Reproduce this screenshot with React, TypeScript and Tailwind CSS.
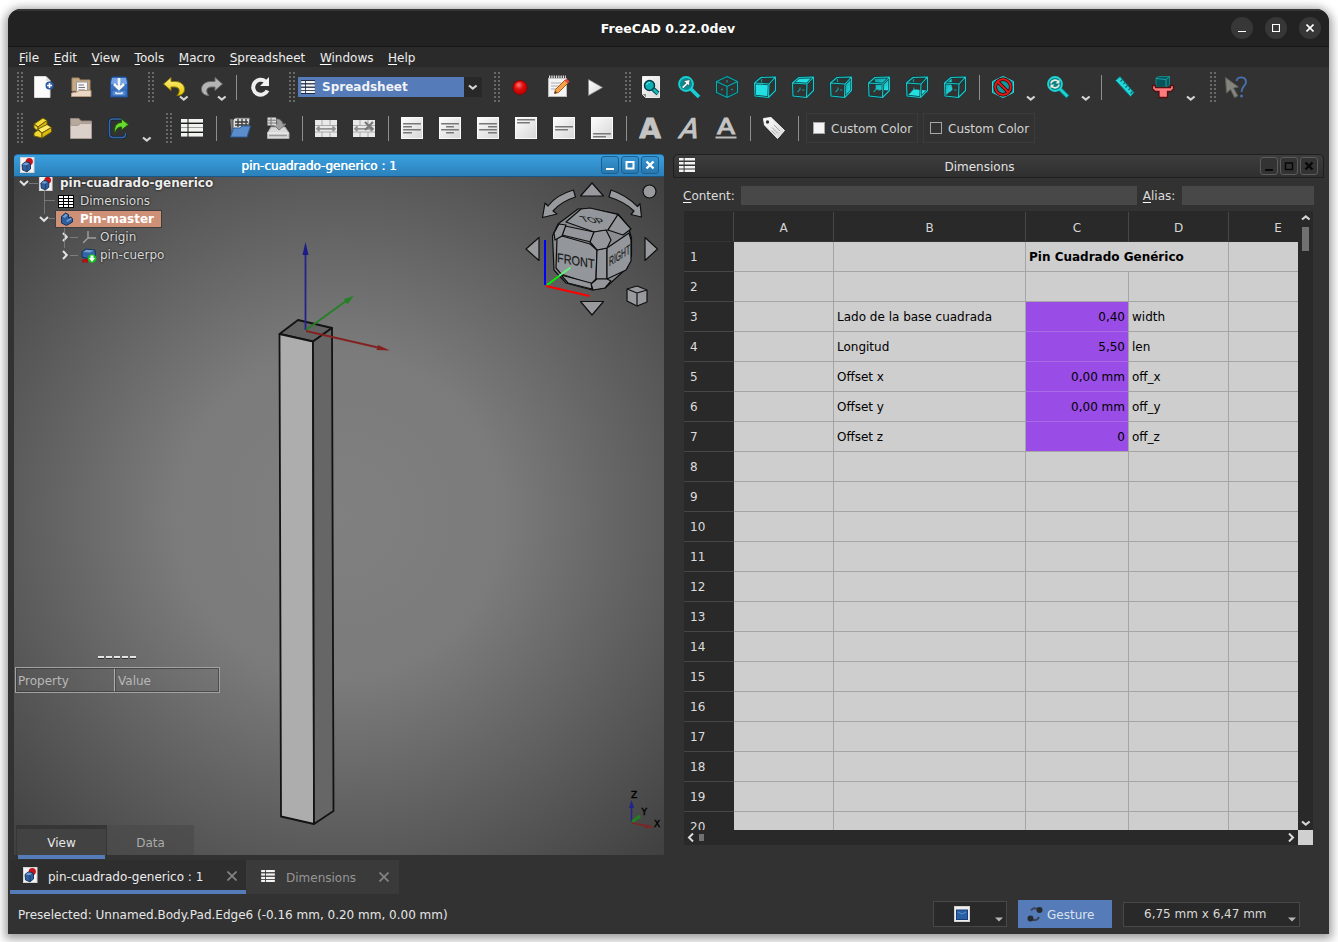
import React from "react";

type Kids = { children?: React.ReactNode };

/* ---------- toolbar building blocks ---------- */

function Icon({ children, label }: Kids & { label?: string }) {
  return (
    <div className="flex h-10 w-[38px] shrink-0 items-center justify-center">
      <svg width="24" height="24" viewBox="0 0 24 24" fill="none" aria-label={label} className="overflow-visible">
        {children}
      </svg>
    </div>
  );
}

function Grip({ className = "w-[17px]" }: { className?: string }) {
  return (
    <div className={`flex shrink-0 justify-end pr-px ${className}`}>
      <svg width="6" height="30" viewBox="0 0 6 30" fill="#686868">
        {[0, 4, 8, 12, 16, 20, 24, 28].map((y) => (
          <g key={y}>
            <rect x="0" y={y} width="2" height="2" />
            <rect x="4" y={y} width="2" height="2" />
          </g>
        ))}
      </svg>
    </div>
  );
}

function Sep({ className = "w-[10px] justify-center" }: { className?: string }) {
  return (
    <div className={`flex shrink-0 ${className}`}>
      <div className="h-[25px] w-px bg-[#8f8f8f]" />
    </div>
  );
}

function Chevron({ d = "M1 1.5L4.8 4.6L8.6 1.5" }: { d?: string }) {
  return (
    <svg width="10" height="7" viewBox="0 0 10 7" fill="none">
      <path d={d} stroke="#d4d4d4" strokeWidth="2.2" />
    </svg>
  );
}

function DropArrow() {
  return (
    <div className="flex h-10 w-[17px] shrink-0 items-end justify-center pb-[5px]">
      <Chevron />
    </div>
  );
}

function IconWithArrow({ children }: Kids) {
  return (
    <div className="relative">
      <Icon>{children}</Icon>
      <div className="absolute right-1 bottom-[5px]">
        <Chevron />
      </div>
    </div>
  );
}

/* ---------- icons ---------- */

function TableRows() {
  return (
    <>
      <rect x="1" y="3" width="22" height="18" fill="#1c1c1c" />
      {[3, 8, 12, 17].map((y) => (
        <g key={y} fill="#f1f3ef">
          <rect x="1" y={y} width="6.5" height="3.6" />
          <rect x="8.5" y={y} width="14.5" height="3.6" />
        </g>
      ))}
    </>
  );
}

function TableGlyph({ w = 16, h = 14 }: { w?: number; h?: number }) {
  return (
    <svg width={w} height={h} viewBox="0 0 16 14" fill="#f3f3f3">
      {[0, 4, 8, 11.5].map((y) => (
        <g key={y}>
          <rect x="0" y={y} width="4.6" height="2.5" />
          <rect x="5.6" y={y} width="10.4" height="2.5" />
        </g>
      ))}
    </svg>
  );
}

function AlignIcon({ lines }: { lines: number[][] }) {
  return (
    <Icon>
      <rect x="1.5" y="1.5" width="21" height="21" fill="url(#paper)" stroke="#fafafa" />
      {lines.map(([x, y, w]) => (
        <rect key={y} x={x} y={y} width={w} height="1.5" rx=".5" fill="#777" />
      ))}
    </Icon>
  );
}

const faces: Record<string, string> = {
  front: "M1.5 8L16 9L15.5 22.5L2 21Z",
  top: "M1.5 8L8 2.5L22.5 2L16 9Z",
  right: "M16 9L22.5 2V15.5L15.5 22.5Z",
  rear: "M8 2.5L22.5 2V15.5L9 14.5Z",
  bottom: "M2 21L9 14.5L22.5 15.5L15.5 22.5Z",
  left: "M1.5 8L8 2.5L9 14.5L2 21Z",
};

function CubeIcon({ face }: { face: string }) {
  const gradient = face === "left" || face === "right" || face === "rear";
  return (
    <Icon>
      <path d="M8.5 3.5V7.5M9 12.5v2.500M9 14.5L6.500 17M11 15H13.500" stroke="#15959a" strokeWidth="1.2" />
      <path d={faces[face]} fill={gradient ? "url(#teal)" : "#24dfe2"} />
      <path d="M1.5 8L16 9L15.5 22.5L2 21ZM1.5 8L8 2.5L22.5 2L16 9M22.5 2V15.5L15.5 22.5" stroke="#073e40" strokeWidth="2.3" strokeLinejoin="round" />
      <path d="M1.5 8L16 9L15.5 22.5L2 21ZM1.5 8L8 2.5L22.5 2L16 9M22.5 2V15.5L15.5 22.5" stroke="#20c2c5" strokeWidth="1.1" strokeLinejoin="round" />
    </Icon>
  );
}

function MergeBase() {
  return (
    <>
      <rect x="1" y="4" width="22" height="17" fill="#e9e9e9" />
      <path d="M1 9.5H23M1 16H23M8 4V9.5M16 4V9.5M8 16V21M16 16V21" stroke="#aaa" />
      <path d="M3 12.8H21M5.5 10.5L3 12.8L5.5 15M18.5 10.5L21 12.8L18.5 15" stroke="#929292" strokeWidth="1.8" />
    </>
  );
}

function LetterIcon({
  className,
  transform,
  weight,
  underline,
  children,
}: Kids & { className: string; transform: string; weight: string; underline?: boolean }) {
  return (
    <Icon>
      <text transform={transform} textAnchor="middle" className={className} fill="#c4c4c4" stroke="#c4c4c4" strokeWidth={weight}>
        {children}
      </text>
      {underline && <rect x="1.5" y="20.500" width="21" height="2" fill="#bdbdbd" />}
    </Icon>
  );
}

function DocIcon({ className = "h-4 w-4" }: { className?: string }) {
  return (
    <svg viewBox="0 0 16 16" className={`shrink-0 ${className}`}>
      <rect x="1.5" y=".5" width="13.5" height="15" fill="#f4f4f4" stroke="#d4d4d4" />
      <circle cx="10.3" cy="4.6" r="3.6" fill="#c4141b" />
      <path d="M3 7.5L6 5L10.5 5.5L11.5 8V12L8 14.8L3.5 13Z" fill="#2f5f9f" stroke="#122c50" strokeWidth=".9" />
      <path d="M3.5 7.5L6.2 5.6L10 6L8 8.2Z" fill="#729fcf" />
      <path d="M8 8.2V14.2" stroke="#183860" strokeWidth=".8" />
    </svg>
  );
}

function Defs() {
  return (
    <svg width="0" height="0" className="absolute">
      <defs>
        <linearGradient id="paper" x1="0" y1="0" x2="1" y2="1">
          <stop offset="0" stopColor="#fdfdfd" />
          <stop offset="1" stopColor="#d6d6d6" />
        </linearGradient>
        <linearGradient id="teal" x1="0" y1="0" x2="1" y2="1">
          <stop offset="0" stopColor="#079aa0" />
          <stop offset="1" stopColor="#2ce6e8" />
        </linearGradient>
        <linearGradient id="yellow" x1="0" y1="0" x2="0" y2="1">
          <stop offset="0" stopColor="#fff08a" />
          <stop offset="1" stopColor="#e5c800" />
        </linearGradient>
        <radialGradient id="redball" cx=".4" cy=".3" r=".7">
          <stop offset="0" stopColor="#ff7777" />
          <stop offset=".5" stopColor="#e01111" />
          <stop offset="1" stopColor="#c00000" />
        </radialGradient>
      </defs>
    </svg>
  );
}

/* ---------- window chrome ---------- */

function TitleBar() {
  const btn = "flex size-[22px] items-center justify-center rounded-full bg-[#373737]";
  return (
    <div className="flex h-[38px] shrink-0 items-center border-t-2 border-b border-t-[#363636] border-b-[#161616] bg-[#222] pr-2">
      <div className="w-[97px]" />
      <div className="flex-1 text-center text-[12.5px] font-bold text-white">FreeCAD 0.22.0dev</div>
      <div className="flex w-[90px] gap-3 pb-px">
        <div className={btn}>
          <svg width="8" height="10" className="mt-1">
            <path d="M0 6.5H8" stroke="#fff" />
          </svg>
        </div>
        <div className={btn}>
          <svg width="8" height="8">
            <path d="M.5.5H7.5V7.5H.5Z" stroke="#fff" fill="none" strokeWidth="1.2" />
          </svg>
        </div>
        <div className={btn}>
          <svg width="8" height="8">
            <path d="M.5.5L7.5 7.5M7.5.5L.5 7.5" stroke="#fff" strokeWidth="1.6" />
          </svg>
        </div>
      </div>
    </div>
  );
}

function Mnemonic({ text }: { text: string }) {
  return (
    <span className="whitespace-nowrap">
      <span className="underline decoration-white decoration-1 underline-offset-2">{text[0]}</span>
      {text.slice(1)}
    </span>
  );
}

function MenuBar() {
  return (
    <div className="flex h-5 shrink-0 items-center gap-[14.6px] bg-[#2a2a2a] pt-0.5 pl-[11px] text-[#eee]">
      {["File", "Edit", "View", "Tools", "Macro", "Spreadsheet", "Windows", "Help"].map((m) => (
        <Mnemonic key={m} text={m} />
      ))}
    </div>
  );
}

function ToolbarTop() {
  return (
    <div className="flex h-10 items-center">
      <Grip className="w-4" />
      <Icon>
        <path d="M3.5 1.5H15L19 5.5V22.5H3.5Z" fill="#fbfbfb" stroke="#d8d8d8" />
        <path d="M15 1.5V6H19" fill="#ddd" />
        <circle cx="18.5" cy="10.5" r="4" fill="#2b5aa5" />
        <path d="M18.5 8V13M16 10.5H21" stroke="#fff" strokeWidth="1.6" />
      </Icon>
      <Icon>
        <path d="M3 3H10L11 5H21V16H3Z" fill="#c7a985" stroke="#a58a68" />
        <rect x="7.5" y="7" width="11" height="11" fill="#f6f6f6" stroke="#999" />
        <path d="M9.5 10H15M9.5 12.5H16M9.5 15H16" stroke="#777" />
        <path d="M2.5 18L8 17L10 15.5H22V21.5H2.5Z" fill="#ead8c4" stroke="#b39a80" />
      </Icon>
      <Icon>
        <path d="M5 2H19L20.500 7V22H3.500V7Z" fill="#3c74c4" stroke="#1d4f99" />
        <path d="M5 3H19L20 9H4Z" fill="#75a5e5" />
        <rect x="5" y="15" width="14" height="6" fill="#5288d4" stroke="#2c5ea8" />
        <path d="M12 3V12M7 9L12 14L17 9" stroke="#f5f5f5" strokeWidth="2.6" />
        <path d="M9 17V18.500H15V17" stroke="#eee" strokeWidth="1.4" />
      </Icon>
      <Grip />
      <IconWithArrow>
        <path d="M1.500 9L9 2.500V6.500H13C19 6.500 22.500 10 22.500 14C22.500 18 20 20.500 15 20.500C18 17.500 18.500 12.500 13 12H9V15.500Z" fill="url(#yellow)" stroke="#8c7600" />
      </IconWithArrow>
      <IconWithArrow>
        <path d="M22.500 9L15 2.500V6.500H11C5 6.500 1.500 10 1.500 14C1.500 18 4 20.500 9 20.500C6 17.500 5.500 12.500 11 12H15V15.500Z" fill="#b4b4b4" stroke="#696969" />
      </IconWithArrow>
      <Sep />
      <Icon>
        <path d="M17.500 6.500A7.500 7.500 0 1 0 19.500 15.500" stroke="#eee" strokeWidth="4" />
        <path d="M21 2V11H12Z" fill="#f4f4f4" />
      </Icon>
      <Grip />
      <div className="mr-0.5 ml-0.5 flex h-5 w-[184px] shrink-0">
        <div className="flex w-[166px] items-center bg-[#557bb8] pl-[3px] font-bold text-[#f1f3f7]">
          <div className="bg-[#1f2e45] py-px">
            <TableGlyph w={14} h={12} />
          </div>
          <span className="ml-[7px]">Spreadsheet</span>
        </div>
        <div className="flex flex-1 items-center justify-center bg-[#282828]">
          <Chevron />
        </div>
      </div>
      <Grip />
      <Icon>
        <circle cx="12" cy="12.500" r="7" fill="#d00" stroke="#7f0808" />
        <circle cx="12" cy="12.500" r="6" fill="url(#redball)" />
      </Icon>
      <Icon>
        <rect x="2.500" y="3.500" width="18" height="18" fill="#f4f4f4" stroke="#bbb" />
        <path d="M3 2H20" stroke="#ddd" strokeWidth="3" strokeDasharray="1.300 1" />
        <path d="M5 8H15M5 11H14M5 14H11" stroke="#aaa" />
        <path d="M8.500 18.500L9.500 14.500L19 5L22 8L12.500 17.500Z" fill="#f5a14a" stroke="#a8601b" />
        <path d="M18.500 5.500L20.500 3.500L23.500 6.500L21.500 8.500Z" fill="#e34a4a" />
        <path d="M8.500 18.500L9.200 16L10.900 17.700Z" fill="#333" />
      </Icon>
      <Icon>
        <path d="M4.500 4.500L18.500 12.500L4.500 20.500Z" fill="url(#paper)" stroke="#888" strokeWidth=".7" />
      </Icon>
      <Grip />
      <Icon>
        <path d="M3.500 1.500H20.500V22.500H6.500L3.500 19.500Z" fill="url(#paper)" stroke="#eee" />
        <path d="M3.500 19L7 22.500V19Z" fill="#888" />
        <path d="M14 14L19 18.500" stroke="#044a50" strokeWidth="4.500" />
        <path d="M14 14L19 18.500" stroke="#16b6bc" strokeWidth="2.600" />
        <circle cx="10.500" cy="10.500" r="5" fill="#0faeb4" stroke="#033f45" strokeWidth="1.500" />
        <path d="M7.500 10A3 3 0 0 1 11 7.500" stroke="#62eef0" />
      </Icon>
      <Icon>
        <path d="M14 14L22 22" stroke="#18cfd2" strokeWidth="3.800" />
        <circle cx="9" cy="9" r="7" fill="#078d94" stroke="#18cfd2" strokeWidth="1.800" />
        <path d="M4.500 12L9 8L6.500 6L13 4.500L12 11L10.500 9.500L6.500 13.500Z" fill="#f5f5f5" stroke="#224a4a" strokeWidth=".6" />
      </Icon>
      <Icon>
        <path d="M12 1.500L22.500 6.500V17.500L12 22.500L1.500 17.500V6.500ZM1.500 6.500L12 11.500L22.500 6.500M12 11.500V22.500" stroke="#064144" strokeWidth="2.300" />
        <path d="M12 1.500L22.500 6.500V17.500L12 22.500L1.500 17.500V6.500ZM1.500 6.500L12 11.500L22.500 6.500M12 11.500V22.500" stroke="#19a5a8" strokeWidth="1.100" />
        <path d="M12 5V7.500M6 15L8 14M18 15L16 14" stroke="#19a5a8" />
      </Icon>
      {["front", "top", "right", "rear", "bottom", "left"].map((f) => (
        <CubeIcon key={f} face={f} />
      ))}
      <Sep />
      <Icon>
        <path d="M12 1.500L22.500 6.500V17.500L12 22.500L1.500 17.500V6.500Z" fill="#0c999d" stroke="#25dde0" />
        <circle cx="12" cy="12" r="7.800" stroke="#350202" strokeWidth="3.600" />
        <path d="M6.500 6.500L17.500 17.500" stroke="#350202" strokeWidth="3.600" />
        <circle cx="12" cy="12" r="7.800" stroke="#e01b1b" strokeWidth="2" />
        <path d="M6.500 6.500L17.500 17.500" stroke="#e01b1b" strokeWidth="2" />
      </Icon>
      <DropArrow />
      <Icon>
        <path d="M14 14L22 22" stroke="#0a6064" strokeWidth="5" />
        <path d="M14 14L21.500 21.500" stroke="#1ed3d6" strokeWidth="3" />
        <circle cx="9" cy="9" r="7" fill="#078085" stroke="#1ed3d6" strokeWidth="1.800" />
        <path d="M5 8.500C5.500 5 10 4 12.500 7M13 9.500C12.500 13 8 14 5.500 11" stroke="#ececdc" strokeWidth="1.700" />
        <path d="M13.500 4.500V8.500H9.500ZM4.500 13.500V9.500H8.500Z" fill="#ececdc" />
      </Icon>
      <DropArrow />
      <Sep className="w-3 justify-end pr-1" />
      <Icon>
        <path d="M2.500 5.500L7 1.500L21 17.500L17.500 21.500Z" fill="#23d6da" stroke="#076d70" />
        <path d="M9.500 4.500L7.500 6.500M12 7.500L10.500 9M14.500 10.500L12.500 12.500M17 13.500L15.500 15M19.500 16.500L17.500 18.500" stroke="#08666a" strokeWidth="1.200" />
      </Icon>
      <Icon>
        <path d="M5 3L8 1.500H18.500V10L15 12H5Z" fill="#075357" stroke="#168388" />
        <path d="M5 3.500L15 4.500L18.500 1.500M15 4.500V12" stroke="#1aa1a5" />
        <path d="M1.500 10.500H4.500V12.500H19.500V10.500H22.500V14L20 16.500H16.500V22.500H8V16.500H4.500L1.500 14Z" fill="#ff7a7d" stroke="#521010" strokeWidth="1.300" />
      </Icon>
      <DropArrow />
      <Grip className="w-[18px]" />
      <Icon>
        <path d="M1.500 2.500L14.500 12L9.500 13L14 21L10.500 22.500L6.500 14.500L2.500 18Z" fill="#85857f" stroke="#5e5e5a" />
        <path d="M12.500 6C13 1 22 1 22 7C22 11 17.500 11 17.500 17" stroke="#4672b0" strokeWidth="1.900" />
        <circle cx="17.500" cy="21" r="1.500" fill="#4672b0" />
      </Icon>
    </div>
  );
}

function ColorButton({ fill }: { fill: string }) {
  return (
    <div className="flex h-[30px] w-[112px] shrink-0 items-center gap-[6px] border border-[#3b3b3b] pl-[6px] whitespace-nowrap text-[#d2d2d2]">
      <span className={`size-3 border border-[#a6a6a6] ${fill}`} />
      <span className="pt-px">Custom Color</span>
    </div>
  );
}

function ToolbarBottom() {
  return (
    <div className="flex h-[42px] items-center">
      <Grip className="w-4" />
      <Icon>
        <path d="M3 8L12 2L16 4.500L7 11ZM3 8L7 11V15L3 12Z" fill="#f5dc3b" stroke="#695b05" />
        <path d="M7 11L16 4.500V9L7 15Z" fill="#dcb911" stroke="#695b05" />
        <path d="M3 17L7 14L11 17V22L3 20Z" fill="#f3d733" stroke="#695b05" />
        <path d="M7 13L16 8.500L20.500 11.500L11 17Z" fill="#ffeb66" stroke="#695b05" />
        <path d="M11 17L20.500 11.500V16L11 22Z" fill="#dcb911" stroke="#695b05" />
      </Icon>
      <Icon>
        <path d="M1.500 2.500H10L12 5H22.500V11H1.500Z" fill="#b7a89e" stroke="#94857c" />
        <path d="M1.500 9.500H9L11.500 7.500H22.500V22.500H1.500Z" fill="#dbd1ca" stroke="#a89b92" />
      </Icon>
      <Icon>
        <path d="M14 3H6C3.500 3 2.500 4 2.500 6V18C2.500 20.500 3.500 21.500 6 21.500H15C17.500 21.500 18.500 20.500 18.500 18V17" stroke="#11243c" strokeWidth="3" />
        <path d="M14 3H6C3.500 3 2.500 4 2.500 6V18C2.500 20.500 3.500 21.500 6 21.500H15C17.500 21.500 18.500 20.500 18.500 18V17" stroke="#3867a2" strokeWidth="1.500" />
        <path d="M8 17C6.500 10 10 6.500 14.500 6.500V3L21.500 8.500L14.500 14V11C10.500 11 9.500 13 8 17Z" fill="#68da2d" stroke="#1c5c08" />
      </Icon>
      <DropArrow />
      <Grip className="w-[18px]" />
      <Icon>
        <TableRows />
      </Icon>
      <Sep />
      <Icon>
        <path d="M2 3L4 20L7 19V4Z" fill="#7b7b7b" />
        <path d="M5 4L7 2H22L20 13H5Z" fill="#e0e0e0" stroke="#555" />
        <path d="M7 6H20M7 9H20M10 3V11M14 3V11M18 3V11" stroke="#383838" strokeWidth="1.300" />
        <path d="M5.500 12H12L14 10H22.500L19 21H2.500Z" fill="#5b8dcc" stroke="#2d5c99" />
      </Icon>
      <Icon>
        <path d="M5 11H19L23 17V22.500H1.500V17Z" fill="#d8d8d8" stroke="#ababab" />
        <path d="M1.500 17H23" stroke="#f0f0f0" />
        <path d="M10 3C14 3 16.500 5 16.500 8H20L13 14L7 8H11C11 6 10.500 5 10 3Z" fill="#a0a0a0" stroke="#777" />
        <path d="M1.500 1.500H10V9.500H1.500Z" fill="#dcdcdc" />
        <path d="M1.500 4.200H10M1.500 7H10M5 1.500V9.500" stroke="#777" />
        <path d="M3 19.500H21" stroke="#999" strokeWidth="1.500" />
      </Icon>
      <Sep />
      <Icon>
        <MergeBase />
      </Icon>
      <Icon>
        <MergeBase />
        <path d="M13 6L21 14M21 6L13 14" stroke="#777" strokeWidth="2.200" />
      </Icon>
      <Sep />
      <AlignIcon lines={[[3, 7, 18], [3, 10, 9], [3, 13, 18], [3, 16, 9]]} />
      <AlignIcon lines={[[3, 7, 18], [8, 10, 8], [3, 13, 18], [8, 16, 8]]} />
      <AlignIcon lines={[[3, 7, 18], [12, 10, 9], [3, 13, 18], [12, 16, 9]]} />
      <AlignIcon lines={[[3, 3, 18], [3, 6, 13]]} />
      <AlignIcon lines={[[3, 10, 18], [3, 13, 13]]} />
      <AlignIcon lines={[[3, 17, 18], [3, 20, 13]]} />
      <Sep />
      <LetterIcon className="text-[27px] font-bold" transform="translate(12 21.5) scale(1.04 1)" weight=".8">
        A
      </LetterIcon>
      <LetterIcon className="text-[27px]" transform="matrix(1 0 -.32 1 11 21.5)" weight="1">
        A
      </LetterIcon>
      <LetterIcon underline className="text-[22px]" transform="translate(12 18) scale(1.2 1)" weight="1">
        A
      </LetterIcon>
      <Sep />
      <Icon>
        <path d="M1.500 2.500L9 1.500L22.500 14.500L15.500 22.500L2.500 9Z" fill="url(#paper)" stroke="#f5f5f5" />
        <circle cx="5.500" cy="6" r="1.700" fill="#333" />
        <path d="M12 9L18 15M10 11.500L16 17.500M9.500 14.500L13.500 18.500" stroke="#aaa" />
      </Icon>
      <Sep />
      <div className="ml-[3px] flex gap-[5px]">
        <ColorButton fill="bg-[#f4f4f4]" />
        <ColorButton fill="bg-transparent" />
      </div>
    </div>
  );
}

function FrameButtons({ active }: { active: boolean }) {
  const c = active ? "#ffffff" : "#080808";
  const box = active
    ? "border-[#1c5f90] bg-gradient-to-b from-[#3795d3] to-[#2878ad]"
    : "border-[#5c5c5c] bg-[#333]";
  const glyphs = [
    <path key="a" d="M2 10H10" stroke={c} strokeWidth="2" />,
    <path key="b" d="M2.500 3V9.500H9.500V3Z" stroke={c} strokeWidth={active ? "2" : "1.500"} />,
    <path key="c" d="M2.500 2.500L9.500 9.500M9.500 2.500L2.500 9.500" stroke={c} strokeWidth="2.400" />,
  ];
  return (
    <div className="flex gap-[2px] pb-px">
      {glyphs.map((g, i) => (
        <div key={i} className={`flex size-[18px] items-center justify-center rounded-[3px] border ${box}`}>
          <svg width="12" height="12" viewBox="0 0 12 12" fill="none">
            {g}
          </svg>
        </div>
      ))}
    </div>
  );
}

/* ---------- 3D view ---------- */

function Scene() {
  return (
    <svg width="650" height="678" viewBox="14 177 650 678" fill="none" className="block">
      <defs>
        <radialGradient id="view" gradientUnits="userSpaceOnUse" cx="339" cy="516" r="470">
          <stop offset="0" stopColor="#808080" />
          <stop offset=".35" stopColor="#7b7b7b" />
          <stop offset="1" stopColor="#404040" />
        </radialGradient>
      </defs>
      <rect x="14" y="177" width="650" height="678" fill="url(#view)" />

      <g stroke="#131313" strokeWidth="1.800" strokeLinejoin="round">
        <path d="M279.500 334L298 320L332 328L313 341.500Z" fill="#636363" />
        <path d="M279.500 334L313 341.500L314 824L281 816.500Z" fill="#adadad" />
        <path d="M313 341.500L332 328L333.500 811L314 824Z" fill="#666" />
      </g>
      <path d="M305.500 330V253" stroke="#23238c" strokeWidth="1.800" />
      <path d="M305.500 242L302.500 255H308.500Z" fill="#1c1c8a" />
      <path d="M306 330L346 301" stroke="#238023" strokeWidth="1.800" />
      <path d="M353.500 296L344 299L347.500 304.500Z" fill="#238023" />
      <path d="M306 331L378 347.500" stroke="#842222" strokeWidth="1.800" />
      <path d="M390 350.500L378 345L376.500 350Z" fill="#842222" />

      <g stroke="#101010" strokeWidth="1.200" strokeLinejoin="round" fill="#989a9e">
        <path d="M592 183L603.500 196H580.500Z" />
        <path d="M592 315L603.500 301.500H580.500Z" />
        <path d="M526 249L539 237.500V260.500Z" />
        <path d="M657.500 249L645 237.500V260.500Z" />
        <circle cx="649.500" cy="191.500" r="6.500" />
        <path d="M573.500 190L575.500 197C566 200 558 205 553 211L557 214L542.500 217.500L545 203L548 206C554 198 563 193 573.500 190Z" />
        <path d="M611 190L609 197C619 200 628 205 634 211L631 214.500L641.500 217L640 203.500L637.500 206.500C630 199 620 193 611 190Z" />
        <path d="M627 289L637 286L647 290V302L637 306L627 301Z" />
        <path d="M627 289L637 293L647 290M637 293V306" />
      </g>

      <g stroke="#0d0d0d" strokeWidth="1.200" strokeLinejoin="round" fill="#93969a">
        <path d="M578 209L590 208.500L618 214L628 226L631.500 238V255L627 268L605 288L592 290L566 283L554 270L552.500 236L558 224Z" fill="#898c90" />
        <path d="M566 222L581 209L590 208L618 214.500L608 230L594 232Z" />
        <path d="M618 214.500L631 229L623 235L608 230Z" />
        <path d="M557 238L562 236L590 244L597 250L596 279L591 284L561 274L556 268Z" />
        <path d="M565 226L594 232L591 242L562 235Z" />
        <path d="M597 250L607 248V279L596 279Z" />
        <path d="M607 248L629 233L631 240V261L626 270L607 279Z" />
        <path d="M594 232L606 230L611 240L607 248L597 250L590 242Z" />
        <path d="M554 233L559 224L566 225L562 236L555 240Z" />
        <path d="M591 284L597 279L607 279L611 281L605 288L593 290Z" />
        <path d="M561 275L591 283L592 289L568 283Z" />
      </g>
      <g fill="#191919" stroke="#191919" strokeWidth=".2" className="font-[Liberation_Sans]">
        <text transform="matrix(.85 .1 .45 .62 583 221.500)" fontSize="13">
          TOP
        </text>
        <text transform="matrix(.84 .15 0 1 557 262)" fontSize="13">
          FRONT
        </text>
        <text transform="matrix(.52 -.33 0 1 609 266.500)" fontSize="13">
          RIGHT
        </text>
      </g>
      <path d="M545 240V285" stroke="#0000ff" strokeWidth="2" />
      <path d="M547 285L559 276" stroke="#00f000" strokeWidth="2" />
      <path d="M559 276L570.500 267.500" stroke="#62f47b" strokeWidth="2" />
      <path d="M546 286L589.500 296" stroke="#ff0000" strokeWidth="2.200" />

      <path d="M631.500 822V807" stroke="#23238c" strokeWidth="1.500" />
      <path d="M631.500 800L629 808H634Z" fill="#23238c" />
      <path d="M632 822L640 816" stroke="#238023" strokeWidth="3" />
      <path d="M632 823L647 826" stroke="#842222" strokeWidth="1.500" />
      <path d="M654 827.500L645 824V828Z" fill="#842222" />
      <g fill="#000" stroke="#000" strokeWidth=".4" className="text-[9px]">
        <text x="631" y="798">Z</text>
        <text x="641.500" y="815">Y</text>
        <text x="654" y="827">X</text>
      </g>
    </svg>
  );
}

function TreeArrow({ open }: { open?: boolean }) {
  return (
    <svg width="10" height="10" viewBox="0 0 10 10" fill="none" className="mr-[3px] shrink-0">
      <path d={open ? "M1 3L5 6.800L9 3" : "M3 1L6.800 5L3 9"} stroke="#e2e2e2" strokeWidth="2" />
    </svg>
  );
}

function Dash() {
  return <span className="mr-[5px] -ml-[3px] h-px w-[8px] shrink-0 bg-[#a8a8a8]/50" />;
}

function Tree() {
  return (
    <div className="absolute top-[-3px] left-0 flex flex-col text-[#d9d9d9] [text-shadow:0_0_2px_#222,0_0_2px_#222]">
      <svg width="70" height="92" className="absolute top-0 left-0" stroke="#929292" strokeOpacity=".6">
        <path d="M30.500 16V40M30.500 26.500H41M35 44.500H41M50.500 54V74" />
      </svg>
      <div className="flex h-[18px] items-center pl-[5px] font-bold text-[#eee]">
        <TreeArrow open />
        <span className="-ml-[3px] h-px w-[9px] bg-[#a8a8a8]/50" />
        <DocIcon className="mr-[7px] h-[15px] w-[15px]" />
        pin-cuadrado-generico
      </div>
      <div className="flex h-[18px] items-center pl-[44px]">
        <svg width="16" height="13" viewBox="0 0 16 13" className="mr-[6px]">
          <rect width="16" height="13" fill="#000" />
          {[1, 4, 7, 10].map((y) =>
            [1, 6, 11].map((x) => <rect key={`${x}-${y}`} x={x} y={y} width="4" height="2" fill="#fff" />)
          )}
        </svg>
        Dimensions
      </div>
      <div className="flex h-[18px] items-center pl-[25px] font-bold text-white">
        <TreeArrow open />
        <div className="ml-[3px] flex h-[18px] w-[107px] items-center border border-[#3d3d3d] bg-[#cf9078] pl-[3px] whitespace-nowrap [text-shadow:none]">
          <svg width="14" height="14" viewBox="0 0 14 14" className="mr-[6px] ml-px shrink-0">
            <path d="M1.500 4.500L5.500 1L8.500 2.500V6L10.500 5L12.500 6.500V10L6.500 13.500L1.500 11Z" fill="#2f5f9f" stroke="#16335c" />
            <path d="M2.500 4.800L5.700 2L7.800 3L5 5.800ZM6.500 8.500L10.500 6L12 7L7 10Z" fill="#729fcf" />
          </svg>
          Pin-master
        </div>
      </div>
      <div className="flex h-[18px] items-center pl-[46px]">
        <TreeArrow />
        <Dash />
        <svg width="14" height="14" viewBox="0 0 14 14" className="mr-[6px] shrink-0" fill="none" stroke="#9f9f9f" strokeWidth="1.400">
          <path d="M5 1V8L0 13M5 8H13" />
        </svg>
        <span className="-ml-[3px]">Origin</span>
      </div>
      <div className="flex h-[18px] items-center pl-[46px]">
        <TreeArrow />
        <Dash />
        <svg width="16" height="15" viewBox="0 0 16 15" className="mr-[5px] -ml-[2px] shrink-0">
          <path d="M1 4L5 1L14 2L14.500 8L8 11L1 9Z" fill="#3465a4" stroke="#16335c" />
          <path d="M2 4L5.500 1.800L13 2.500L9 4.500Z" fill="#729fcf" />
          <path d="M1 11H7V14.500H1Z" fill="#a81515" />
          <circle cx="11" cy="10.500" r="4.300" fill="#10c41b" />
          <path d="M9.500 7.500H12.500V10H14L11 14L8 10H9.500Z" fill="#fff" />
        </svg>
        <span className="-ml-[2px]">pin-cuerpo</span>
      </div>
    </div>
  );
}

function ViewWindow() {
  return (
    <div className="flex h-[701px] w-[650px] flex-col">
      <div className="flex h-[23px] items-center rounded-t-[4px] border-t border-b border-t-[#1d6da5] border-b-[#175786] bg-gradient-to-b from-[#3aa0e0] to-[#2b80ba] pr-[5px] pl-[5px]">
        <DocIcon className="mb-0.5 h-4 w-4" />
        <div className="flex-1 pt-px pl-[2px] text-center text-white [text-shadow:0.5px_0_0_#fff]">pin-cuadrado-generico : 1</div>
        <FrameButtons active />
      </div>
      <div className="relative h-[678px] overflow-hidden">
        <Scene />
        <Tree />
        <div className="absolute top-[478px] left-0 w-[206px] text-[#b8b8b8]">
          <div className="flex justify-center gap-[2px] pt-px">
            {[0, 1, 2, 3, 4].map((i) => (
              <span key={i} className="h-[3px] w-[6px] border-b border-[#333] bg-[#e4e4e4]" />
            ))}
          </div>
          <div className="mt-[8px] ml-px flex h-[26px] w-[205px] border border-[#a2a2a2] outline-1 -outline-offset-2 outline-[#333]/60">
            <div className="flex w-[99px] items-center border-r border-[#b0b0b0] pt-px pl-[2px]">Property</div>
            <div className="flex items-center border-l border-[#444]/70 pt-px pl-[2px]">Value</div>
          </div>
        </div>
        <div className="absolute bottom-0 left-[2px] flex h-[30px] w-[178px]">
          <div className="flex w-[91px] items-center justify-center border-t-4 border-r border-l border-[#363636] bg-[#424242] pt-px text-[#e8e8e8]">
            View
          </div>
          <div className="flex flex-1 items-center justify-center bg-[#4a4a4a]/70 pt-[5px] text-[#aaa]">Data</div>
        </div>
      </div>
      <div className="-mb-1 ml-1 h-1 w-[87px] shrink-0 bg-[#557bb8]" />
    </div>
  );
}

/* ---------- spreadsheet ---------- */

type Row = { b?: string; c?: string; d?: string };
const data: Record<number, Row> = {
  3: { b: "Lado de la base cuadrada", c: "0,40", d: "width" },
  4: { b: "Longitud", c: "5,50", d: "len" },
  5: { b: "Offset x", c: "0,00 mm", d: "off_x" },
  6: { b: "Offset y", c: "0,00 mm", d: "off_y" },
  7: { b: "Offset z", c: "0", d: "off_z" },
};

const grid = "grid grid-cols-[50px_100px_192px_103px_100px_69px]";

function SheetRow({ n }: { n: number }) {
  const r = data[n] ?? {};
  const cell = "flex items-center border-r border-b border-[#a5a5a5] px-[3px] pt-px whitespace-nowrap";
  return (
    <div className={`${grid} h-[30px] shrink-0 text-black`}>
      <div className="flex items-center border-b border-[#464646] bg-[#292929] pt-px pl-[6px] text-[#ddd]">{n}</div>
      <div className={cell} />
      <div className={cell}>{r.b}</div>
      {n === 1 ? (
        <div className={`${cell} col-span-2 font-bold`}>Pin Cuadrado Genérico</div>
      ) : (
        <>
          <div
            className={
              r.c
                ? `flex items-center justify-end border-r border-b border-r-[#a5a5a5] bg-[#994de6] pt-px pr-[3px] whitespace-nowrap ${n === 7 ? "border-b-[#a5a5a5]" : "border-b-[#a66be5]"}`
                : cell
            }
          >
            {r.c}
          </div>
          <div className={cell}>{r.d}</div>
        </>
      )}
      <div className="border-b border-[#a5a5a5]" />
    </div>
  );
}

function Sheet() {
  const rows = Array.from({ length: 20 }, (_, i) => i + 1);
  return (
    <div className="ml-[11px] flex h-[634px] w-[629px] flex-col">
      <div className="flex h-[619px] shrink-0">
        <div className="flex w-[614px] flex-col overflow-hidden bg-[#cecece]">
          <div className={`${grid} h-[31px] shrink-0 bg-[#292929] pt-px text-[#d6d6d6]`}>
            {["", "A", "B", "C", "D"].map((h) => (
              <div key={h} className="flex items-center justify-center border-r border-b border-[#464646] border-b-[#333] pt-0.5">
                {h}
              </div>
            ))}
            <div className="flex items-center justify-center pt-px pl-[29px]">E</div>
          </div>
          {rows.map((n) => (
            <SheetRow key={n} n={n} />
          ))}
        </div>
        <div className="flex w-[15px] flex-col items-center bg-[#292929] pt-[3px] pb-[3px]">
          <Chevron d="M1 5.500L4.800 2.400L8.600 5.500" />
          <div className="mt-[6px] h-6 w-[7px] bg-[#717171]" />
          <div className="flex-1" />
          <Chevron />
        </div>
      </div>
      <div className="flex h-[15px]">
        <div className="flex w-[614px] items-center bg-[#292929] px-[3px]">
          <svg width="8" height="9" viewBox="0 0 8 9" fill="none">
            <path d="M6 .5L2 4.500L6 8.500" stroke="#ddd" strokeWidth="2" />
          </svg>
          <div className="ml-1 h-[7px] w-[5px] bg-[#717171]" />
          <div className="flex-1" />
          <svg width="8" height="9" viewBox="0 0 8 9" fill="none">
            <path d="M2 .5L6 4.500L2 8.500" stroke="#ddd" strokeWidth="2" />
          </svg>
        </div>
        <div className="w-[15px] bg-[#d0d0d0]" />
      </div>
    </div>
  );
}

function SheetWindow() {
  return (
    <div className="flex h-[701px] w-[651px] flex-col">
      <div className="flex h-[24px] shrink-0 items-center rounded-t-[5px] border border-[#1f1f1f] bg-gradient-to-b from-[#3d3d3d] to-[#2f2f2f] pr-[5px] pl-[5px] text-[#e2e2e2]">
        <div className="mb-[3px]">
          <TableGlyph />
        </div>
        <div className="flex-1 pt-0.5 pl-[4px] text-center">Dimensions</div>
        <FrameButtons active={false} />
      </div>
      <div className="flex h-[33px] shrink-0 items-center pt-[2px] pl-[10px] text-[#ddd]">
        <Mnemonic text="Content:" />
        <div className="ml-[6px] h-[19px] w-[396px] bg-[#484848]" />
        <div className="w-[6px]" />
        <Mnemonic text="Alias:" />
        <div className="ml-[7px] h-[19px] w-[132px] bg-[#484848]" />
      </div>
      <Sheet />
    </div>
  );
}

/* ---------- bottom ---------- */

function CloseX() {
  return (
    <svg width="10" height="10" viewBox="0 0 10 10" stroke="#848484" strokeWidth="1.700">
      <path d="M.5.5L9.500 9.500M9.500.5L.5 9.500" />
    </svg>
  );
}

function DocumentTabs() {
  return (
    <div className="flex h-[34px] shrink-0 pl-[2px]">
      <div className="flex w-[236px] items-center border-b-4 border-[#557bb8] bg-[#2e2e2e] pt-0.5 pr-[9px] pl-[12px] text-[#ececec]">
        <DocIcon className="mb-0.5 h-4 w-4" />
        <span className="ml-[10px] flex-1 pt-[2px] whitespace-nowrap">pin-cuadrado-generico : 1</span>
        <CloseX />
      </div>
      <div className="flex w-[153px] items-center bg-[#3a3a3a] pr-[10px] pl-[15px] text-[#969696]">
        <div className="mb-[3px]">
          <TableGlyph w={14} h={12} />
        </div>
        <span className="ml-[11px] flex-1 pt-px">Dimensions</span>
        <CloseX />
      </div>
    </div>
  );
}

function SmallTriangle() {
  return (
    <svg width="8" height="5" className="absolute right-[3px] bottom-1" fill="#b5b5b5">
      <path d="M0 .5H8L4 4.500Z" />
    </svg>
  );
}

function StatusBar() {
  return (
    <div className="flex h-[40px] shrink-0 items-center pr-[29px] pl-[10px] text-[#e6e6e6]">
      <span className="flex-1 pt-px whitespace-nowrap">Preselected: Unnamed.Body.Pad.Edge6 (-0.16 mm, 0.20 mm, 0.00 mm)</span>
      <div className="relative flex h-[26px] w-[74px] items-center border border-[#484848] bg-[#292929] pl-5">
        <svg width="16" height="16" viewBox="0 0 16 16">
          <rect x=".5" y=".5" width="15" height="15" fill="#eee" stroke="#d2d2d2" />
          <rect x="2.500" y="4" width="11" height="9.500" fill="#2860a5" stroke="#173f77" />
          <path d="M4 6L8 8L12 6" stroke="#5c91d0" fill="none" />
        </svg>
        <SmallTriangle />
      </div>
      <div className="ml-[11px] flex h-[28px] w-[94px] items-center bg-[#557bb8] pl-[9px] text-[#dbe2ee]">
        <svg width="17" height="17" viewBox="0 0 17 17" fill="none" className="mr-[3px]">
          <path d="M4 4.500C6 1.500 9 1.500 11 4M12 11C10.500 14.500 7 15 4 13" stroke="#39465a" strokeWidth="2" />
          <circle cx="12.500" cy="4" r="3" fill="#272b30" />
          <circle cx="3.500" cy="12.500" r="3" fill="#272b30" />
        </svg>
        <span className="pt-px">Gesture</span>
      </div>
      <div className="relative ml-[11px] flex h-[25px] w-[177px] items-center border border-[#484848] bg-[#292929] pl-5 text-[#d8d8d8]">
        6,75 mm x 6,47 mm
        <SmallTriangle />
      </div>
    </div>
  );
}

export default function App() {
  return (
    <div className="h-[942px] w-[1338px] overflow-hidden bg-white pt-[9px] pl-[8px] text-[12px] leading-[16px] font-['DejaVu_Sans',sans-serif]">
      <Defs />
      <div className="flex h-[925px] w-[1321px] flex-col overflow-hidden rounded-t-[13px] bg-[#323232] shadow-[0_2px_10px_3px_rgba(0,0,0,0.38)]">
        <TitleBar />
        <MenuBar />
        <ToolbarTop />
        <ToolbarBottom />
        <div className="flex h-[711px] shrink-0 gap-[9px] pt-[5px] pl-[6px]">
          <ViewWindow />
          <SheetWindow />
        </div>
        <DocumentTabs />
        <StatusBar />
      </div>
    </div>
  );
}
